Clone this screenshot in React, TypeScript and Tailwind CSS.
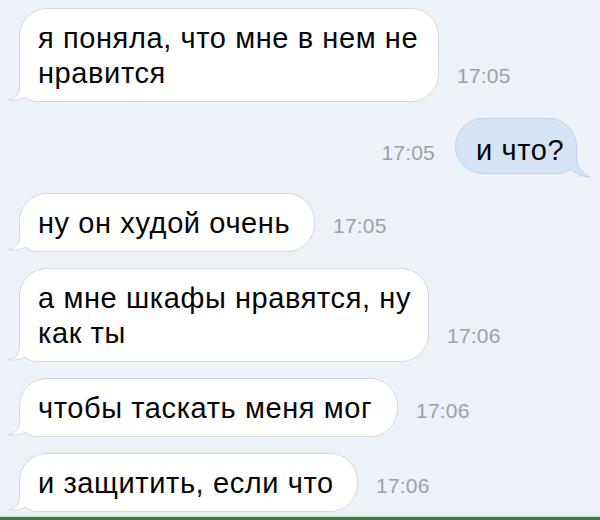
import React from "react";

type Msg = {
  lines: string[];
  w: string;
  time: string;
  out?: boolean;
  mt: string;
};

const msgs: Msg[] = [
  { lines: ["я поняла, что мне в нем не", "нравится"], w: "w-[420px]", time: "17:05", mt: "mt-0" },
  { lines: ["и что?"], w: "w-[122px]", time: "17:05", out: true, mt: "mt-[16px]" },
  { lines: ["ну он худой очень"], w: "w-[296px]", time: "17:05", mt: "mt-[19px]" },
  { lines: ["а мне шкафы нравятся, ну", "как ты"], w: "w-[410px]", time: "17:06", mt: "mt-[16px]" },
  { lines: ["чтобы таскать меня мог"], w: "w-[379px]", time: "17:06", mt: "mt-[16px]" },
  { lines: ["и защитить, если что"], w: "w-[339px]", time: "17:06", mt: "mt-[16px]" },
];

function TailIn() {
  const outline = "M12.5 6 L12.5 15 C12.5 21 9 26 1.5 27.8 C7 28.6 14 27.6 18.5 25.2";
  return (
    <svg
      className="absolute -left-[13px] -bottom-[1px] overflow-visible pointer-events-none"
      width="40"
      height="30"
      viewBox="0 0 40 30"
    >
      <path d={outline + " L24 20 L24 6 Z"} fill="#ffffff" />
      <path d={outline} fill="none" stroke="#d3d9e1" strokeWidth="1" />
    </svg>
  );
}

function TailOut() {
  const outline = "M12.5 4 L12.5 14 C12.5 22 8 29 -1 33 C6 33.2 13 29.5 18.5 25.2";
  return (
    <svg
      className="absolute -right-[13px] -bottom-[5px] overflow-visible pointer-events-none -scale-x-100"
      width="40"
      height="34"
      viewBox="0 0 40 34"
    >
      <path d={outline + " L24 20 L24 4 Z"} fill="#d5e4f7" />
      <path d={outline} fill="none" stroke="#bfd2ec" strokeWidth="1" />
    </svg>
  );
}

function Bubble({ m }: { m: Msg }) {
  const two = m.lines.length > 1;
  if (m.out) {
    return (
      <div
        className={`relative ${m.w} shrink-0 bg-[#d5e4f7] border border-[#bfd2ec] rounded-[28px] rounded-br-[18px] pl-[20px] pt-[14px] pb-[6px] text-[29px] tracking-[0.6px] leading-[34px] text-[#050505] whitespace-nowrap`}
      >
        <TailOut />
        <span className="relative">{m.lines[0]}</span>
      </div>
    );
  }
  return (
    <div
      className={`relative ${m.w} shrink-0 bg-white border border-[#d3d9e1] rounded-[28px] rounded-bl-[18px] pl-[18px] pt-[12px] pb-[11px] text-[29px] tracking-[0.6px] ${two ? "leading-[34.5px]" : "leading-[34px]"} text-[#050505] whitespace-nowrap`}
    >
      <TailIn />
      {m.lines.map((l, i) => (
        <div key={i} className="relative">
          {l}
        </div>
      ))}
    </div>
  );
}

function Time({ t }: { t: string }) {
  return (
    <span className="text-[21px] leading-[24px] text-[#9ba1a9] tracking-[0.2px] shrink-0">{t}</span>
  );
}

export default function App() {
  return (
    <div className="w-[600px] h-[520px] bg-[#edf1f8] flex flex-col overflow-hidden font-['Liberation_Sans',Arial,sans-serif]">
      <div className="flex flex-col pt-[8px] pl-[19px] pr-[23px]">
        {msgs.map((m, i) =>
          m.out ? (
            <div key={i} className={`flex justify-end [align-items:last_baseline] gap-[20px] ${m.mt}`}>
              <Time t={m.time} />
              <Bubble m={m} />
            </div>
          ) : (
            <div key={i} className={`flex [align-items:last_baseline] gap-[18px] ${m.mt}`}>
              <Bubble m={m} />
              <Time t={m.time} />
            </div>
          )
        )}
      </div>
      <div className="mt-auto h-[1px] bg-[#cfe0cf]" />
      <div className="h-[3px] bg-[#3b7d3e]" />
    </div>
  );
}
